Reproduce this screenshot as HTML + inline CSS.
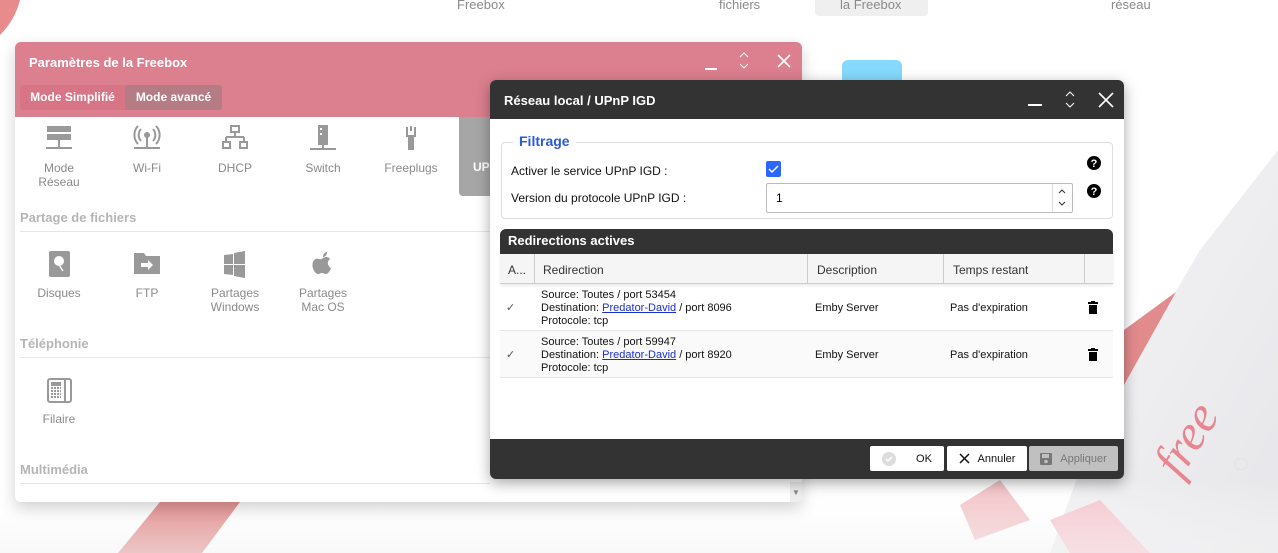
<!DOCTYPE html>
<html><head><meta charset="utf-8"><style>
*{box-sizing:border-box;margin:0;padding:0}
body{width:1278px;height:553px;overflow:hidden;background:#fff;font-family:"Liberation Sans",sans-serif;position:relative}
.a{position:absolute}
.tab{position:absolute;top:-3px;font-size:13px;color:#8a8a8a}
.lp{left:15px;top:42px;width:787px;height:460px;border-radius:6px;background:#fff;box-shadow:0 6px 16px rgba(0,0,0,.18);overflow:hidden}
.ic{position:absolute;width:80px;text-align:center;font-size:12px;color:#8a8a8a;line-height:14px}
.ic svg{display:block;margin:0 auto 8px}
.sec{position:absolute;left:5px;width:470px;font-size:13px;font-weight:bold;color:#b5b5b5;border-bottom:1px solid #e6e6e6;padding-bottom:6px}
.dlg{left:490px;top:80px;width:634px;height:399px;border-radius:6px;background:#fff;box-shadow:0 4px 14px rgba(0,0,0,.35);overflow:hidden}
.sm{font-size:11px;color:#111;line-height:13px}
.btn{position:absolute;top:446px;height:25px;border-radius:2px;background:#fff;font-size:11px;color:#111;display:flex;align-items:center;justify-content:center;gap:8px}
a{color:#1a2fd0}
</style></head><body>
<svg class="a" style="left:0;top:0" width="1278" height="553">
<defs><linearGradient id="g" x1="0" y1="0" x2="1" y2="1"><stop offset="0" stop-color="#f6f6f7"/><stop offset="1" stop-color="#e6e6ea"/></linearGradient>
<linearGradient id="w" x1="0" y1="0" x2="0" y2="1"><stop offset="0" stop-color="#fff" stop-opacity="0"/><stop offset="1" stop-color="#f4f4f4"/></linearGradient></defs>
<path d="M0 35 Q15 20 20 0 L0 0Z" fill="#e78b8c"/>
<path d="M118 553 L160 502 L240 502 L202 553Z" fill="#e07f7f"/>
<path d="M1278 150 L1200 250 L1130 370 L1080 470 L1050 553 L1278 553Z" fill="url(#g)"/>
<path d="M1176 292 L1124 330 L1124 385Z" fill="#e28b8d"/>
<path d="M960 505 L1000 480 L1030 520 L975 540Z" fill="#f2c2c6"/>
<path d="M1050 520 L1100 500 L1150 553 L1070 553Z" fill="#f5c3cc"/>
<rect x="0" y="480" width="1278" height="73" fill="url(#w)" opacity=".6"/>
<text x="1180" y="480" transform="rotate(-58 1180 480)" font-family="Liberation Serif" font-style="italic" font-size="50" fill="#e8868f">free</text>
<circle cx="1241" cy="464" r="6" fill="none" stroke="#e2e2e2"/>
<rect x="842" y="60" width="60" height="30" rx="6" fill="#85d9fd"/>
</svg>
<div class="a" style="left:815px;top:-2px;width:113px;height:18px;border-radius:0 0 4px 4px;background:#efefef"></div>
<div class="tab" style="left:457px">Freebox</div>
<div class="tab" style="left:719px">fichiers</div>
<div class="tab" style="left:840px">la Freebox</div>
<div class="tab" style="left:1111px">réseau</div>

<div class="a lp">
 <div class="a" style="left:0;top:0;width:787px;height:75px;background:#dc7f8f"></div>
 <div class="a" style="left:14px;top:13px;color:#fff;font-weight:bold;font-size:13px">Paramètres de la Freebox</div>
 <div class="a" style="left:690px;top:26px;width:12px;height:1.5px;background:#fff"></div>
 <svg class="a" style="left:723px;top:9px" width="12" height="20"><path d="M2 6l4-4 4 4M2 13l4 4 4-4" stroke="#fff" fill="none"/></svg>
 <svg class="a" style="left:762px;top:12px" width="14" height="14"><path d="M1 1l12 12M13 1L1 13" stroke="#fff" stroke-width="1.6"/></svg>
 <div class="a" style="left:5px;top:43px;width:105px;height:25px;background:#d77586;border-radius:3px 0 0 3px;color:#fff;font-size:12px;font-weight:bold;line-height:25px;text-align:center">Mode Simplifié</div>
 <div class="a" style="left:110px;top:43px;width:97px;height:25px;background:#b67c86;border-radius:0 3px 3px 0;color:#fff;font-size:12px;font-weight:bold;line-height:25px;text-align:center">Mode avancé</div>
 <div class="a" style="left:444px;top:75px;width:40px;height:79px;background:#a6a6a6;border-radius:0 0 0 4px"></div>
 <div class="a" style="left:458px;top:118px;color:#fff;font-size:12px;font-weight:bold">UPnP</div>
 <div class="ic" style="left:4px;top:83px"><svg width="28" height="28"><rect x="2" y="1" width="24" height="6" fill="#999"/><rect x="2" y="9" width="24" height="6" fill="#999"/><rect x="13" y="15" width="2" height="8" fill="#999"/><rect x="1" y="22" width="26" height="2" fill="#999"/></svg>Mode<br>Réseau</div>
 <div class="ic" style="left:92px;top:83px"><svg width="28" height="28"><circle cx="14" cy="10" r="3" fill="#999"/><path d="M8 4a9 9 0 0 0 0 12M20 4a9 9 0 0 1 0 12M5 1a13 13 0 0 0 0 18M23 1a13 13 0 0 1 0 18" stroke="#999" stroke-width="2" fill="none"/><rect x="13" y="12" width="2" height="11" fill="#999"/><rect x="1" y="22" width="26" height="2" fill="#999"/></svg>Wi-Fi</div>
 <div class="ic" style="left:180px;top:83px"><svg width="28" height="28"><rect x="10" y="1" width="8" height="6" fill="none" stroke="#999" stroke-width="2"/><path d="M14 7v5M5 12h18M5 12v5M23 12v5" stroke="#999" stroke-width="2"/><rect x="2" y="17" width="7" height="6" fill="none" stroke="#999" stroke-width="2"/><rect x="19" y="17" width="7" height="6" fill="none" stroke="#999" stroke-width="2"/></svg>DHCP</div>
 <div class="ic" style="left:268px;top:83px"><svg width="28" height="28"><rect x="9" y="0" width="10" height="20" fill="#999"/><rect x="11" y="3" width="2" height="2" fill="#fff"/><rect x="11" y="8" width="2" height="2" fill="#fff"/><rect x="13" y="20" width="2" height="4" fill="#999"/><rect x="1" y="23" width="26" height="2" fill="#999"/></svg>Switch</div>
 <div class="ic" style="left:356px;top:83px"><svg width="28" height="28"><path d="M10 2v9h8V2" stroke="#999" stroke-width="2" fill="none"/><rect x="13" y="1" width="2" height="5" fill="#999"/><rect x="11" y="11" width="6" height="14" fill="#999"/></svg>Freeplugs</div>
 <div class="sec" style="top:168px">Partage de fichiers</div>
 <div class="ic" style="left:4px;top:208px"><svg width="28" height="28"><rect x="4" y="1" width="21" height="26" rx="2" fill="#999"/><circle cx="14" cy="11" r="5" fill="#fff"/><path d="M12 12l6 9" stroke="#fff" stroke-width="1.5"/></svg>Disques</div>
 <div class="ic" style="left:92px;top:208px"><svg width="28" height="28"><path d="M1 3h10l2 3h14v18H1z" fill="#999"/><path d="M8 13h7v-3l5 5-5 5v-3H8z" fill="#fff"/></svg>FTP</div>
 <div class="ic" style="left:180px;top:208px"><svg width="28" height="28"><path d="M3 5l9-1v10H3zM13 3l11-2v13H13zM3 15h9v10l-9-1zM13 15h11v13l-11-2z" fill="#999"/></svg>Partages<br>Windows</div>
 <div class="ic" style="left:268px;top:208px"><svg width="28" height="28"><path d="M14 8c2-1 5-2 7 1-3 2-3 7 1 9-1 3-3 6-5 6-2 0-2-1-4-1s-2 1-4 1c-3 0-7-7-5-12 1-3 4-4 6-3 1 0 2 1 4-1z" fill="#999"/><path d="M14 7c0-3 2-5 4-5 0 3-2 5-4 5z" fill="#999"/></svg>Partages<br>Mac OS</div>
 <div class="sec" style="top:294px">Téléphonie</div>
 <div class="ic" style="left:4px;top:334px"><svg width="28" height="28"><rect x="3" y="3" width="23" height="23" rx="2" fill="none" stroke="#999" stroke-width="2"/><rect x="19" y="4" width="2" height="21" fill="#999"/><rect x="6" y="6" width="10" height="4" fill="#999"/><path d="M6 12h10M6 15h10M6 18h10M6 21h10" stroke="#999" stroke-width="2" stroke-dasharray="2 1"/></svg>Filaire</div>
 <div class="sec" style="top:420px">Multimédia</div>
 <div class="a" style="left:775px;top:440px;width:12px;height:20px;background:#eee;font-size:8px;color:#888;text-align:center;line-height:22px">▼</div>
</div>

<div class="a dlg">
 <div class="a" style="left:0;top:0;width:634px;height:39px;background:#333"></div>
 <div class="a" style="left:14px;top:13px;color:#fff;font-weight:bold;font-size:13px">Réseau local / UPnP IGD</div>
 <div class="a" style="left:538px;top:24px;width:14px;height:1.5px;background:#fff"></div>
 <svg class="a" style="left:573px;top:10px" width="14" height="20"><path d="M3 6l4-4 4 4M3 13l4 4 4-4" stroke="#fff" fill="none"/></svg>
 <svg class="a" style="left:608px;top:12px" width="16" height="16"><path d="M1 1l14 14M15 1L1 15" stroke="#fff" stroke-width="1.6"/></svg>
 <div class="a" style="left:11px;top:62px;width:612px;height:77px;border:1px solid #ddd;border-radius:4px"></div>
 <div class="a" style="left:23px;top:53px;background:#fff;padding:0 6px;color:#2a5bd7;font-size:14px;font-weight:bold">Filtrage</div>
 <div class="a" style="left:21px;top:84px;font-size:12px;color:#111">Activer le service UPnP IGD :</div>
 <div class="a" style="left:276px;top:81px;width:15px;height:16px;background:#2a66ff;border-radius:2px"><svg width="15" height="16"><path d="M3 8l3 3 6-6" stroke="#fff" stroke-width="1.5" fill="none"/></svg></div>
 <div class="a" style="left:21px;top:111px;font-size:12px;color:#111">Version du protocole UPnP IGD :</div>
 <div class="a" style="left:276px;top:103px;width:307px;height:30px;border:1px solid #bbb;border-radius:2px;font-size:12px;line-height:28px;padding-left:9px">1</div>
 <div class="a" style="left:562px;top:104px;width:1px;height:28px;background:#ddd"></div>
 <svg class="a" style="left:566px;top:106px" width="12" height="24"><path d="M3 7l3-3 3 3M3 16l3 3 3-3" stroke="#333" fill="none"/></svg>
 <svg class="a" style="left:597px;top:76px" width="14" height="14"><circle cx="7" cy="7" r="7"/><text x="7" y="11" font-size="11" font-weight="bold" fill="#fff" text-anchor="middle" font-family="Liberation Sans">?</text></svg>
 <svg class="a" style="left:597px;top:104px" width="14" height="14"><circle cx="7" cy="7" r="7"/><text x="7" y="11" font-size="11" font-weight="bold" fill="#fff" text-anchor="middle" font-family="Liberation Sans">?</text></svg>
 <div class="a" style="left:10px;top:149px;width:613px;height:25px;background:#333;border-radius:6px 6px 0 0;color:#fff;font-size:13px;font-weight:bold;padding:4px 8px">Redirections actives</div>
 <div class="a" style="left:10px;top:174px;width:613px;height:30px;background:#f5f5f5;border-bottom:1px solid #ccc;font-size:12px;color:#333;box-shadow:0 2px 3px rgba(0,0,0,.08)">
  <span class="a" style="left:8px;top:9px">A...</span>
  <span class="a" style="left:34px;top:0;height:30px;border-left:1px solid #ccc"></span>
  <span class="a" style="left:43px;top:9px">Redirection</span>
  <span class="a" style="left:307px;top:0;height:30px;border-left:1px solid #ccc"></span>
  <span class="a" style="left:317px;top:9px">Description</span>
  <span class="a" style="left:443px;top:0;height:30px;border-left:1px solid #ccc"></span>
  <span class="a" style="left:453px;top:9px">Temps restant</span>
  <span class="a" style="left:584px;top:0;height:30px;border-left:1px solid #ccc"></span>
 </div>
 <div class="a" style="left:10px;top:204px;width:613px;height:47px;border-bottom:1px solid #e6e6e6"></div>
 <div class="a" style="left:10px;top:251px;width:613px;height:47px;background:#fafafa;border-bottom:1px solid #e6e6e6"></div>
 <div class="a sm" style="left:16px;top:222px;color:#555">✓</div>
 <div class="a sm" style="left:51px;top:209px">Source: Toutes / port 53454<br>Destination: <a href="#">Predator-David</a> / port 8096<br>Protocole: tcp</div>
 <div class="a sm" style="left:325px;top:222px">Emby Server</div>
 <div class="a sm" style="left:460px;top:222px">Pas d'expiration</div>
 <svg class="a" style="left:598px;top:221px" width="10" height="13"><rect x="0" y="1" width="10" height="2"/><rect x="3" y="0" width="4" height="2"/><rect x="1" y="4" width="8" height="9"/></svg>
 <div class="a sm" style="left:16px;top:269px;color:#555">✓</div>
 <div class="a sm" style="left:51px;top:256px">Source: Toutes / port 59947<br>Destination: <a href="#">Predator-David</a> / port 8920<br>Protocole: tcp</div>
 <div class="a sm" style="left:325px;top:269px">Emby Server</div>
 <div class="a sm" style="left:460px;top:269px">Pas d'expiration</div>
 <svg class="a" style="left:598px;top:268px" width="10" height="13"><rect x="0" y="1" width="10" height="2"/><rect x="3" y="0" width="4" height="2"/><rect x="1" y="4" width="8" height="9"/></svg>
 <div class="a" style="left:0;top:359px;width:634px;height:40px;background:#333"></div>
</div>
<div class="btn" style="left:870px;width:74px"><svg width="14" height="14"><circle cx="7" cy="7" r="7" fill="#ddd"/><path d="M4 7l2 2 4-4" stroke="#fff" stroke-width="1.5" fill="none"/></svg><span style="margin-left:12px">OK</span></div>
<div class="btn" style="left:947px;width:80px"><svg width="11" height="11"><path d="M1 1l9 9M10 1L1 10" stroke="#111" stroke-width="1.5"/></svg>Annuler</div>
<div class="btn" style="left:1029px;width:89px;background:#c0c0c0;color:#777"><svg width="12" height="12"><rect width="12" height="12" rx="1" fill="#777"/><rect x="2" y="1" width="7" height="4" fill="#c0c0c0"/><circle cx="6" cy="8.5" r="1.8" fill="#c0c0c0"/></svg>Appliquer</div>
</body></html>
